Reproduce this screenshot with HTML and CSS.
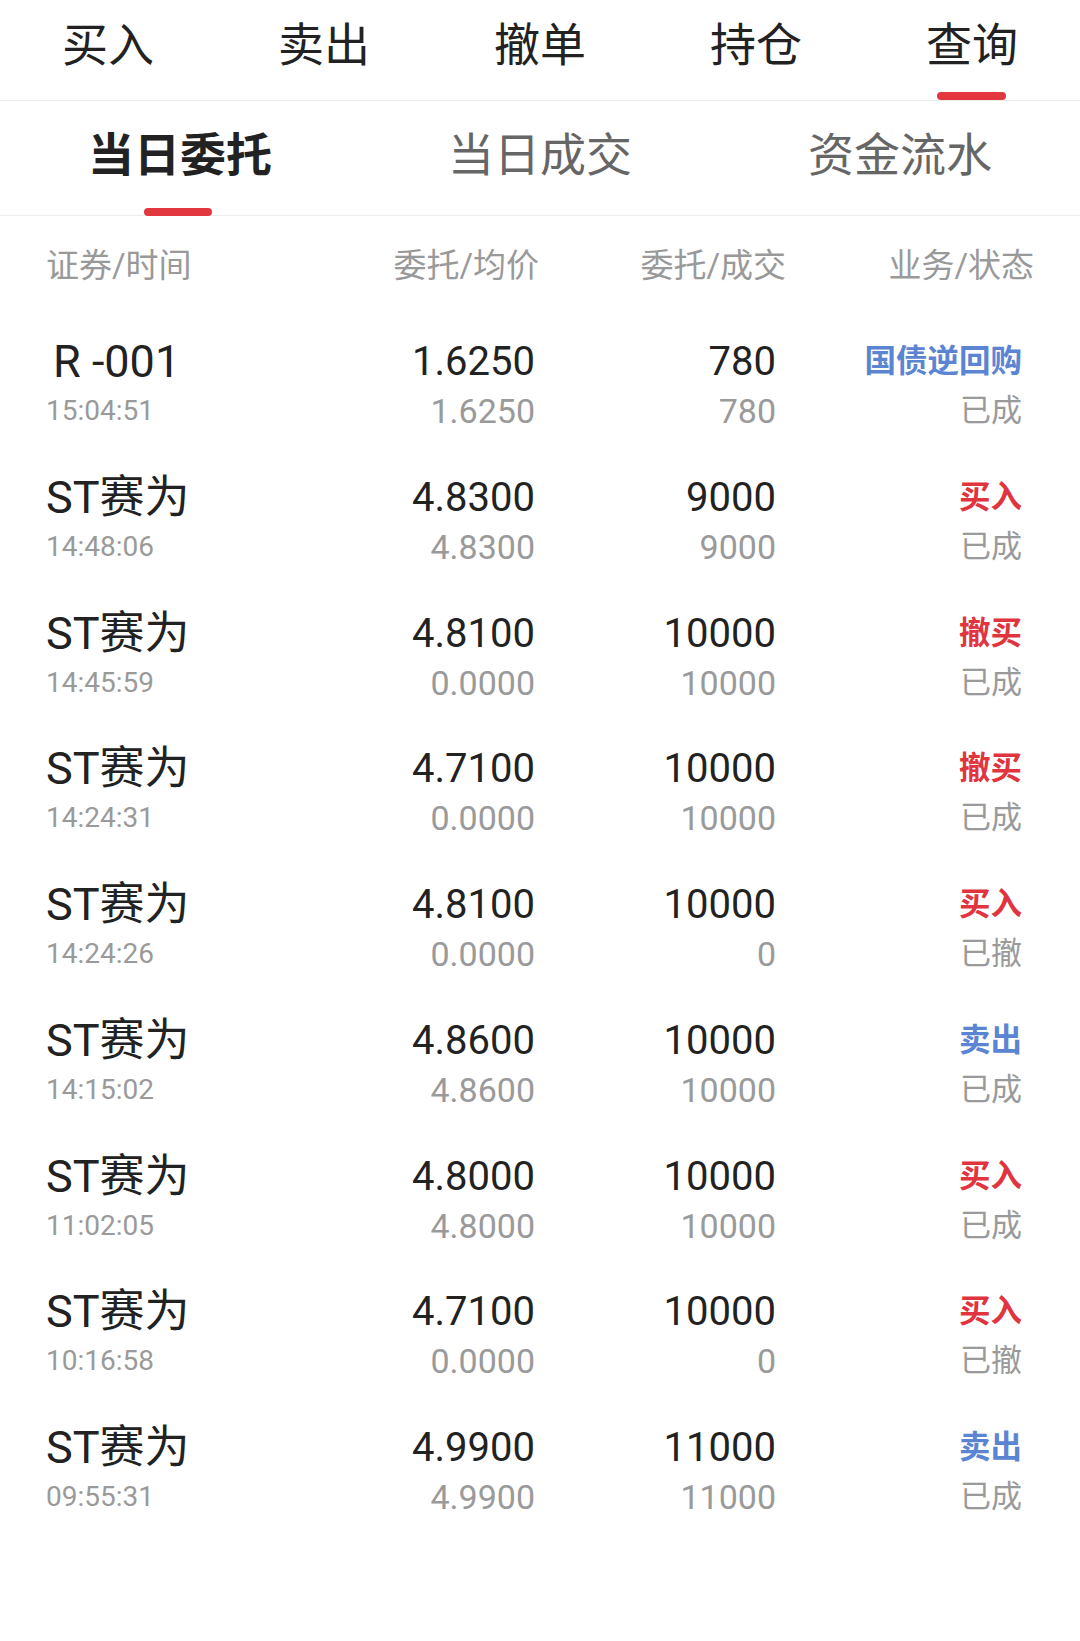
FILE: index.html
```html
<!DOCTYPE html>
<html lang="zh-CN">
<head>
    <meta charset="UTF-8">
    <meta name="viewport" content="width=device-width, initial-scale=1.0">
    <title>查询 - 当日委托</title>
    <link rel="stylesheet" href="styles.css">
</head>
<body>
    <nav class="tabs">
        <div class="tab">买入</div>
        <div class="tab">卖出</div>
        <div class="tab">撤单</div>
        <div class="tab">持仓</div>
        <div class="tab active">查询</div>
    </nav>

    <nav class="subtabs">
        <div class="subtab active">当日委托</div>
        <div class="subtab">当日成交</div>
        <div class="subtab">资金流水</div>
    </nav>

    <div class="orders">
        <div class="row head">
            <span>证券/时间</span>
            <span class="num">委托/均价</span>
            <span class="num">委托/成交</span>
            <span class="num">业务/状态</span>
        </div>

        <div class="row">
            <div class="cell"><span class="name name-r">R -001</span><span class="sub time">15:04:51</span></div>
            <div class="cell num"><span class="main">1.6250</span><span class="sub">1.6250</span></div>
            <div class="cell num"><span class="main">780</span><span class="sub">780</span></div>
            <div class="cell num"><span class="kind blue">国债逆回购</span><span class="state">已成</span></div>
        </div>
        <div class="row">
            <div class="cell"><span class="name">ST赛为</span><span class="sub time">14:48:06</span></div>
            <div class="cell num"><span class="main">4.8300</span><span class="sub">4.8300</span></div>
            <div class="cell num"><span class="main">9000</span><span class="sub">9000</span></div>
            <div class="cell num"><span class="kind red">买入</span><span class="state">已成</span></div>
        </div>
        <div class="row">
            <div class="cell"><span class="name">ST赛为</span><span class="sub time">14:45:59</span></div>
            <div class="cell num"><span class="main">4.8100</span><span class="sub">0.0000</span></div>
            <div class="cell num"><span class="main">10000</span><span class="sub">10000</span></div>
            <div class="cell num"><span class="kind red">撤买</span><span class="state">已成</span></div>
        </div>
        <div class="row">
            <div class="cell"><span class="name">ST赛为</span><span class="sub time">14:24:31</span></div>
            <div class="cell num"><span class="main">4.7100</span><span class="sub">0.0000</span></div>
            <div class="cell num"><span class="main">10000</span><span class="sub">10000</span></div>
            <div class="cell num"><span class="kind red">撤买</span><span class="state">已成</span></div>
        </div>
        <div class="row">
            <div class="cell"><span class="name">ST赛为</span><span class="sub time">14:24:26</span></div>
            <div class="cell num"><span class="main">4.8100</span><span class="sub">0.0000</span></div>
            <div class="cell num"><span class="main">10000</span><span class="sub">0</span></div>
            <div class="cell num"><span class="kind red">买入</span><span class="state">已撤</span></div>
        </div>
        <div class="row">
            <div class="cell"><span class="name">ST赛为</span><span class="sub time">14:15:02</span></div>
            <div class="cell num"><span class="main">4.8600</span><span class="sub">4.8600</span></div>
            <div class="cell num"><span class="main">10000</span><span class="sub">10000</span></div>
            <div class="cell num"><span class="kind blue">卖出</span><span class="state">已成</span></div>
        </div>
        <div class="row">
            <div class="cell"><span class="name">ST赛为</span><span class="sub time">11:02:05</span></div>
            <div class="cell num"><span class="main">4.8000</span><span class="sub">4.8000</span></div>
            <div class="cell num"><span class="main">10000</span><span class="sub">10000</span></div>
            <div class="cell num"><span class="kind red">买入</span><span class="state">已成</span></div>
        </div>
        <div class="row">
            <div class="cell"><span class="name">ST赛为</span><span class="sub time">10:16:58</span></div>
            <div class="cell num"><span class="main">4.7100</span><span class="sub">0.0000</span></div>
            <div class="cell num"><span class="main">10000</span><span class="sub">0</span></div>
            <div class="cell num"><span class="kind red">买入</span><span class="state">已撤</span></div>
        </div>
        <div class="row">
            <div class="cell"><span class="name">ST赛为</span><span class="sub time">09:55:31</span></div>
            <div class="cell num"><span class="main">4.9900</span><span class="sub">4.9900</span></div>
            <div class="cell num"><span class="main">11000</span><span class="sub">11000</span></div>
            <div class="cell num"><span class="kind blue">卖出</span><span class="state">已成</span></div>
        </div>
    </div>
</body>
</html>
```

FILE: styles.css
```css
body {
  margin: 0;
  padding: 0;
  background: #fff;
  color: #222;
  font-family: Roboto, "Noto Sans CJK SC", sans-serif;
}

/* top tabs */
.tabs {
  display: flex;
  height: 100px;
  border-bottom: 1px solid #ececec;
}

.tab {
  flex: 1;
  position: relative;
  text-align: center;
  font-size: 46px;
  line-height: 90px;
  color: #222;
}

.tab.active::after {
  content: "";
  position: absolute;
  left: 50%;
  bottom: 0;
  width: 69px;
  height: 8px;
  margin-left: -35px;
  border-radius: 4px;
  background: #e3373f;
}

/* sub tabs */
.subtabs {
  display: flex;
  height: 114px;
  border-bottom: 1px solid #ececec;
}

.subtab {
  flex: 1;
  position: relative;
  text-align: center;
  font-size: 46px;
  line-height: 108px;
  color: #666;
}

.subtab.active {
  color: #222;
  font-weight: bold;
}

.subtab.active::after {
  content: "";
  position: absolute;
  left: 50%;
  bottom: -1px;
  width: 68px;
  height: 8px;
  margin-left: -36px;
  border-radius: 4px;
  background: #e3373f;
}

/* orders table */
.row {
  display: grid;
  grid-template-columns: 279px 210px 241px 246px;
  padding: 24px 58px 13.75px 46px;
}

.row.head {
  padding-top: 26px;
  padding-bottom: 24px;
  font-size: 33px;
  line-height: 48px;
  color: #999;
}

.row.head span:nth-child(2) {
  margin-right: -4px;
}

.row.head span:nth-child(3) {
  margin-right: -10px;
}

.row.head span:nth-child(4) {
  margin-right: -12px;
}

.cell {
  display: flex;
  flex-direction: column;
}

.num {
  text-align: right;
}

.name {
  font-size: 45px;
  line-height: 48px;
  color: #222;
}

.name-r {
  padding-left: 7px;
}

.main {
  font-size: 40px;
  line-height: 48px;
  color: #222;
}

.sub {
  font-size: 34px;
  line-height: 50px;
  color: #9a9a9a;
}

.sub.time {
  font-size: 28px;
}

.kind {
  font-size: 31.5px;
  font-weight: bold;
  line-height: 48px;
}

.state {
  font-size: 31px;
  line-height: 50px;
  color: #9a9a9a;
}

.red {
  color: #e0353f;
}

.blue {
  color: #5b85d3;
}
```
